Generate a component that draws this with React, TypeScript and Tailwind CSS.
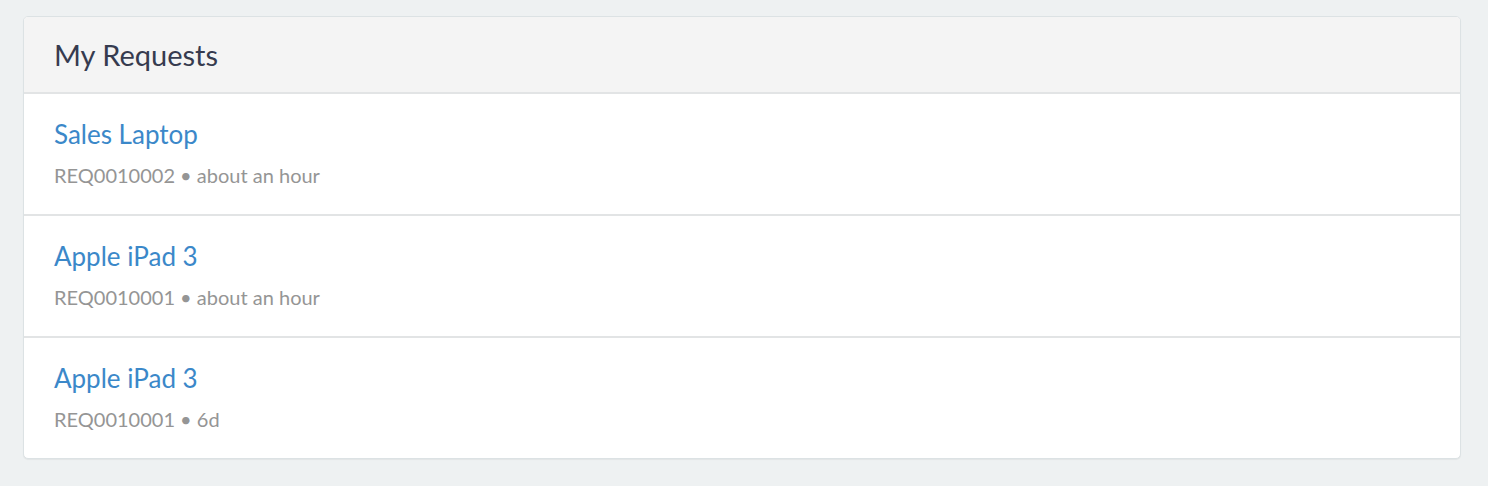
import React from 'react';

interface Request {
  title: string;
  number: string;
  age: string;
}

const requests: Request[] = [
  { title: 'Sales Laptop', number: 'REQ0010002', age: 'about an hour' },
  { title: 'Apple iPad 3', number: 'REQ0010001', age: 'about an hour' },
  { title: 'Apple iPad 3', number: 'REQ0010001', age: '6d' },
];

const App = () => {
  return (
    <div className="min-h-[486px] w-full bg-[#eef1f2] pl-[23px] pr-[27px] pt-4 pb-6 font-['Lato','Noto_Sans',sans-serif]">
      <div className="overflow-hidden rounded-[5px] border border-[#dce2e4] bg-white shadow-[0_1px_1px_rgba(0,0,0,0.05)]">
        <div className="flex h-[77px] items-center border-b-2 border-[#e2e4e5] bg-[#f4f4f4] px-[30px]">
          <h2 className="text-[29px] leading-[36px] text-[#363b4f]">My Requests</h2>
        </div>
        <div className="divide-y-2 divide-[#e2e4e5]">
          {requests.map((req, i) => (
            <div key={i} className="flex h-[122px] flex-col px-[30px] pt-[24px] last:h-[120px]">
              <a href="#" className="text-[26px] leading-[32px] text-[#3b88c9]">
                {req.title}
              </a>
              <p className="mt-[13px] text-[20px] leading-[24px] text-[#959595]">
                {req.number} • {req.age}
              </p>
            </div>
          ))}
        </div>
      </div>
    </div>
  );
};

export default App;
